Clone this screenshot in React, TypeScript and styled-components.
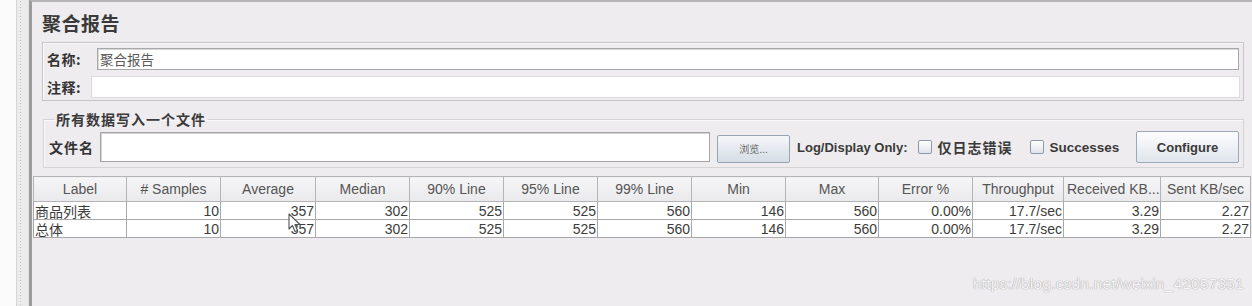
import React from "react";
import styled, { createGlobalStyle } from "styled-components";

const GlobalStyle = createGlobalStyle`
  html, body {
    margin: 0;
    padding: 0;
    width: 1252px;
    height: 306px;
    overflow: hidden;
    background: #eeecee;
  }
  * {
    box-sizing: border-box;
  }
`;

const cjk = `"Noto Sans CJK SC", "Liberation Sans", sans-serif`;
const latin = `"Liberation Sans", Arial, "Noto Sans CJK SC", sans-serif`;

const columns = [
  { title: "Label", width: 93 },
  { title: "# Samples", width: 94 },
  { title: "Average", width: 95 },
  { title: "Median", width: 94 },
  { title: "90% Line", width: 94 },
  { title: "95% Line", width: 94 },
  { title: "99% Line", width: 94 },
  { title: "Min", width: 94 },
  { title: "Max", width: 93 },
  { title: "Error %", width: 94 },
  { title: "Throughput", width: 91 },
  { title: "Received KB...", width: 97 },
  { title: "Sent KB/sec", width: 90 },
];

const rows = [
  ["商品列表", "10", "357", "302", "525", "525", "560", "146", "560", "0.00%", "17.7/sec", "3.29", "2.27"],
  ["总体", "10", "357", "302", "525", "525", "560", "146", "560", "0.00%", "17.7/sec", "3.29", "2.27"],
];

export default function App() {
  return (
    <>
      <GlobalStyle />
      <Page>
        <TreePane />
        <Splitter />
        <Main>
          <Top>
            <Title>聚合报告</Title>
            <NameBox>
              <FieldRow>
                <FieldLabel>名称:</FieldLabel>
                <NameInput>聚合报告</NameInput>
              </FieldRow>
              <FieldRow>
                <FieldLabel $narrow>注释:</FieldLabel>
                <CommentInput />
              </FieldRow>
            </NameBox>
            <Group>
              <Legend>所有数据写入一个文件</Legend>
              <FileRow>
                <FileLabel>文件名</FileLabel>
                <FileInput />
                <BrowseButton>浏览...</BrowseButton>
                <OptionText>Log/Display Only:</OptionText>
                <Check $gap={10} />
                <CheckLabel $cjk>仅日志错误</CheckLabel>
                <Check $gap={17} />
                <CheckLabel>Successes</CheckLabel>
                <ConfigureButton>Configure</ConfigureButton>
              </FileRow>
            </Group>
          </Top>
          <Table>
            <colgroup>
              {columns.map((c) => (
                <col key={c.title} style={{ width: c.width }} />
              ))}
            </colgroup>
            <thead>
              <tr>
                {columns.map((c) => (
                  <HeadCell key={c.title}>{c.title}</HeadCell>
                ))}
              </tr>
            </thead>
            <tbody>
              {rows.map((r) => (
                <tr key={r[0]}>
                  {r.map((v, i) => (
                    <Cell key={i} $label={i === 0}>
                      {v}
                    </Cell>
                  ))}
                </tr>
              ))}
            </tbody>
          </Table>
          <Cursor viewBox="0 0 14 20" width="14" height="20">
            <path d="M1 1 L1 16 L4.5 12.5 L7 18.5 L9.5 17.5 L7 11.5 L12 11.5 Z" fill="#fff" stroke="#555" strokeWidth="1.1" strokeLinejoin="round" />
          </Cursor>
          <Watermark>https://blog.csdn.net/weixin_42057351</Watermark>
        </Main>
      </Page>
    </>
  );
}

const Page = styled.div`
  display: flex;
  width: 1252px;
  height: 306px;
  background: #eeecee;
`;

const TreePane = styled.div`
  width: 17px;
  background: #fbfbfb;
  border-right: 1px solid #d6d6d6;
`;

const Splitter = styled.div`
  width: 12px;
  background-color: #ecebec;
  background-image: radial-gradient(circle, #c4c4c8 0.8px, transparent 1px);
  background-size: 3px 3px;
  background-position: 2px 0;
  background-repeat: repeat-y;
  border-right: 1px solid #e2e2e2;
`;

const Main = styled.div`
  position: relative;
  flex: 1;
  border-left: 3px solid #9c9c9e;
  border-top: 2px solid #b4b4b6;
`;

const Top = styled.div`
  padding: 0 8px 0 10px;
`;

const Title = styled.div`
  font-family: ${cjk};
  font-size: 19px;
  font-weight: 700;
  color: #3a3a3a;
  line-height: 24px;
  padding-top: 9px;
  letter-spacing: 0.5px;
`;

const NameBox = styled.div`
  margin-top: 7px;
  border: 1px solid #c6c6c8;
  box-shadow: inset 1px 1px 0 #fafafa;
  padding: 5px 3px 2px 4px;
  display: flex;
  flex-direction: column;
  gap: 6px;
`;

const FieldRow = styled.div`
  display: flex;
  align-items: center;
  height: 22px;
`;

const FieldLabel = styled.div<{ $narrow?: boolean }>`
  font-family: ${cjk};
  font-size: 14px;
  font-weight: 700;
  color: #333;
  width: ${(p) => (p.$narrow ? "44px" : "50px")};
  letter-spacing: 0.5px;
`;

const NameInput = styled.div`
  flex: 1;
  height: 22px;
  background: #fff;
  border: 1px solid #a8a8aa;
  box-shadow: inset 1px 1px 0 #d8d8d8;
  font-family: ${cjk};
  font-size: 13.5px;
  color: #5a5a5a;
  line-height: 20px;
  padding-left: 2px;
  margin-right: 1px;
`;

const CommentInput = styled.div`
  flex: 1;
  height: 22px;
  background: #fff;
  border: 1px solid #dcdcdc;
`;

const Group = styled.fieldset`
  margin: 10px 0 0 1px;
  padding: 3px 4px 3px 5px;
  border: 1px solid #d4d4d6;
  box-shadow: inset 1px 1px 0 #fafafa;
  min-width: 0;
`;

const Legend = styled.legend`
  font-family: ${cjk};
  font-size: 14px;
  font-weight: 700;
  color: #3a3a3a;
  padding: 0 2px;
  margin-left: 5px;
  line-height: 16px;
  letter-spacing: 1px;
`;

const FileRow = styled.div`
  display: flex;
  align-items: center;
  height: 34px;
`;

const FileLabel = styled.div`
  font-family: ${cjk};
  font-size: 14px;
  font-weight: 700;
  color: #333;
  width: 51px;
  letter-spacing: 1px;
`;

const FileInput = styled.div`
  width: 610px;
  height: 30px;
  background: #fff;
  border: 1px solid #a4a4a6;
  box-shadow: inset 1px 1px 0 #d4d4d4;
`;

const BrowseButton = styled.div`
  margin-left: 7px;
  width: 73px;
  height: 28px;
  margin-top: 3px;
  border: 1px solid #97a4b3;
  border-radius: 2px;
  background: linear-gradient(#f4f6f9, #d6dde6);
  font-family: ${cjk};
  font-size: 10px;
  color: #6a6a6a;
  display: flex;
  align-items: center;
  justify-content: center;
`;

const OptionText = styled.div`
  margin-left: 7px;
  font-family: ${latin};
  font-size: 13px;
  font-weight: 700;
  color: #3a3a3a;
`;

const Check = styled.div<{ $gap: number }>`
  margin-left: ${(p) => p.$gap}px;
  width: 14px;
  height: 14px;
  border: 1px solid #8d99a8;
  border-radius: 2px;
  background: linear-gradient(#ffffff, #dfe4ea);
`;

const CheckLabel = styled.div<{ $cjk?: boolean }>`
  margin-left: 6px;
  font-family: ${(p) => (p.$cjk ? cjk : latin)};
  font-size: ${(p) => (p.$cjk ? "14px" : "13.5px")};
  font-weight: 700;
  color: #3a3a3a;
  letter-spacing: ${(p) => (p.$cjk ? "1px" : "0")};
`;

const ConfigureButton = styled.div`
  margin-left: auto;
  width: 103px;
  height: 32px;
  border: 1px solid #9aa8b8;
  border-radius: 2px;
  background: linear-gradient(#fdfdfe, #dfe5ec);
  font-family: ${latin};
  font-size: 13px;
  font-weight: 700;
  color: #3a3a3a;
  display: flex;
  align-items: center;
  justify-content: center;
`;

const Table = styled.table`
  margin-top: 8px;
  margin-left: 1px;
  width: 1217px;
  border-collapse: collapse;
  table-layout: fixed;
  font-family: ${latin};
  font-size: 14px;
`;

const HeadCell = styled.th`
  height: 25px;
  padding: 0 3px;
  font-weight: 400;
  color: #555;
  text-align: center;
  background: linear-gradient(#f6f6f7, #eaeaec);
  border: 1px solid #b4b4b6;
  white-space: nowrap;
  overflow: hidden;
`;

const Cell = styled.td<{ $label?: boolean }>`
  height: 18px;
  padding: 0 1px;
  line-height: 16px;
  background: #fff;
  color: #3c3c3c;
  text-align: ${(p) => (p.$label ? "left" : "right")};
  font-family: ${(p) => (p.$label ? cjk : latin)};
  font-size: 14px;
  border: 1px solid #a8a8aa;
  white-space: nowrap;
  overflow: hidden;
`;

const Cursor = styled.svg`
  position: absolute;
  left: 256px;
  top: 211px;
`;

const Watermark = styled.div`
  position: absolute;
  right: 8px;
  bottom: 13px;
  font-family: ${latin};
  font-size: 15.5px;
  color: #f6f4f6;
  text-shadow: 0 0 1px #a8a6a8, 0 0 1px #a8a6a8;
  letter-spacing: 0.2px;
`;
